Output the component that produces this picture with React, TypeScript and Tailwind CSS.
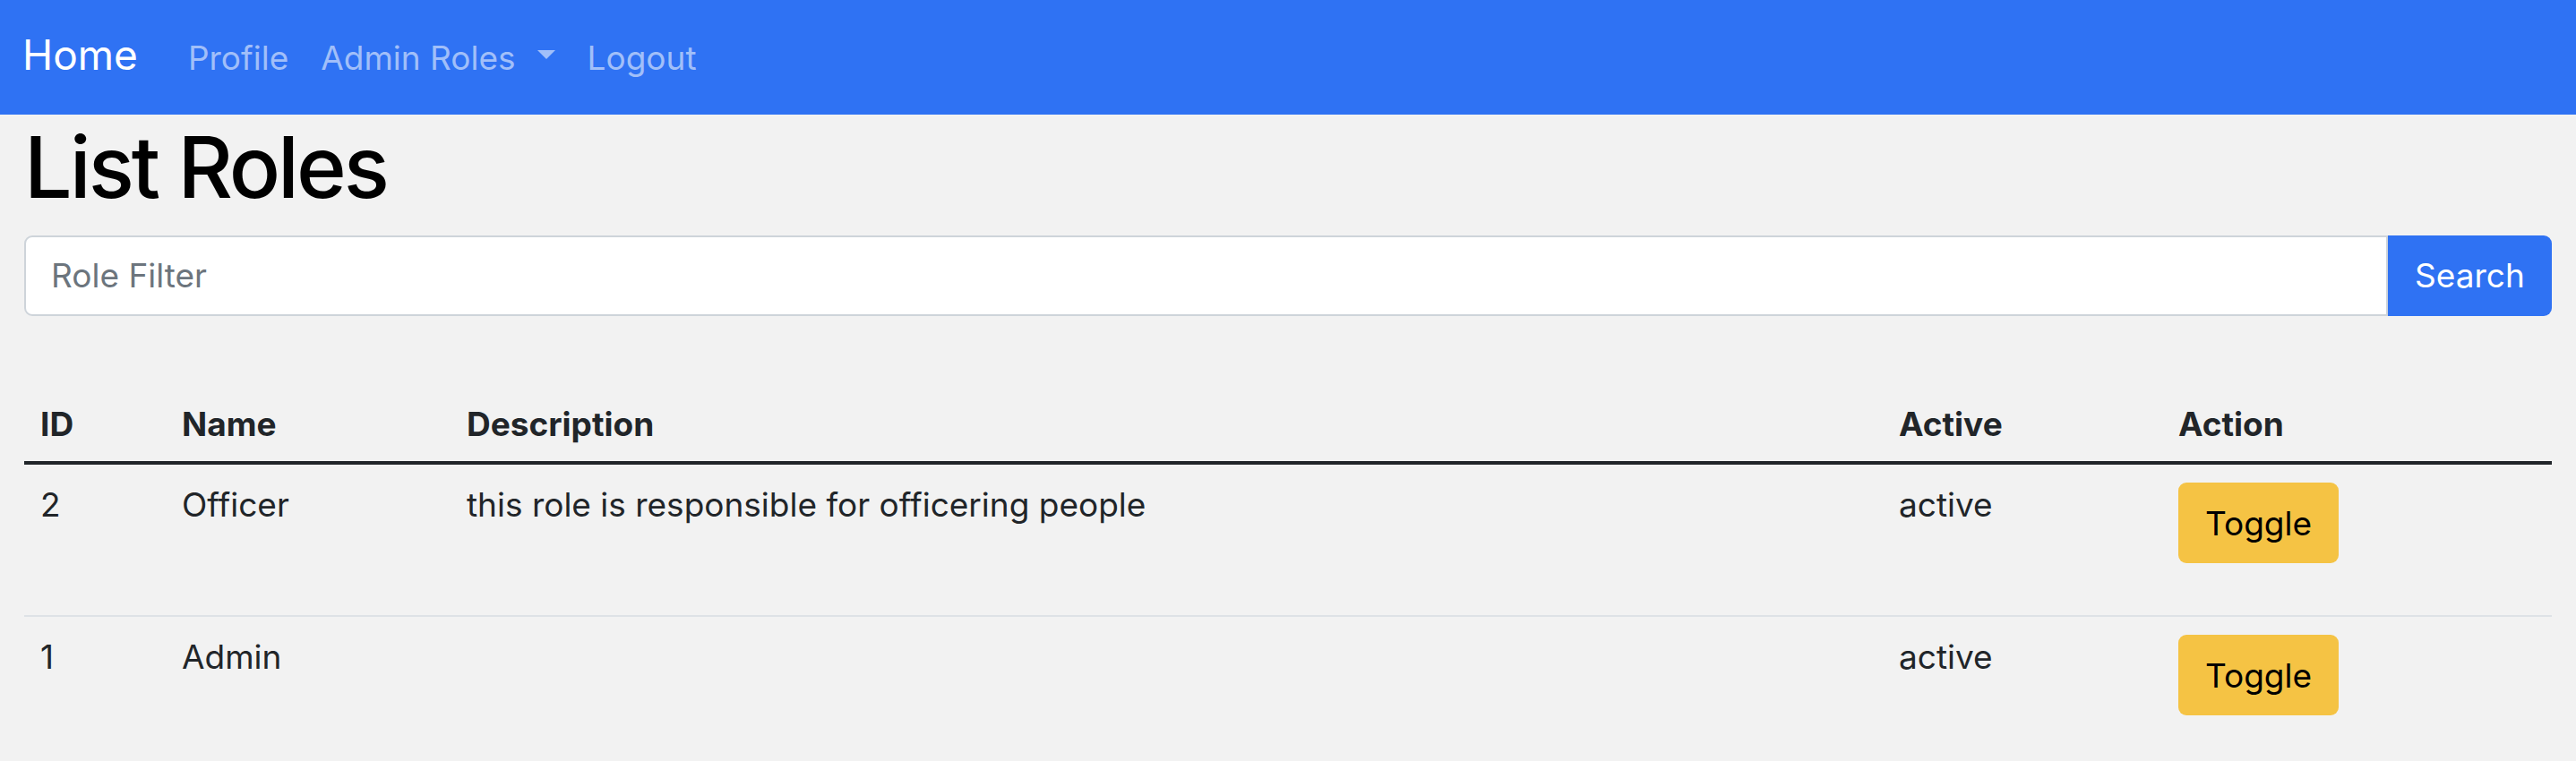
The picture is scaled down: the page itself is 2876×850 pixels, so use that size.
import React from 'react';

type Role = { id: number; name: string; description: string; status: string };

const roles: Role[] = [
  { id: 2, name: 'Officer', description: 'this role is responsible for officering people', status: 'active' },
  { id: 1, name: 'Admin', description: '', status: 'active' },
];

const cols = 'grid grid-cols-[158px_318px_1fr_312px_435px]';

function NavBar() {
  return (
    <nav className="bg-[#2f72f3] h-[128px] flex items-center px-[25px]">
      <a className="text-white text-[46px] leading-[69px] mr-[38px] mb-[5px]">Home</a>
      <a className="text-[#a1bff9] text-[37px] leading-[55px] px-[18px]">Profile</a>
      <a className="text-[#a1bff9] text-[37px] leading-[55px] px-[18px] flex items-center">
        Admin Roles
        <span className="ml-[24px] mb-[6px] w-0 h-0 border-t-[10px] border-x-[10px] border-x-transparent border-t-[#a1bff9]" />
      </a>
      <a className="text-[#a1bff9] text-[37px] leading-[55px] px-[18px]">Logout</a>
    </nav>
  );
}

function RoleRow({ role }: { role: Role }) {
  return (
    <div className={`${cols} h-[170px] border-b-2 border-[#dee2e6] text-[37px] leading-[55px] text-[#212529]`}>
      <div className="pt-[17px] px-[18px]">{role.id}</div>
      <div className="pt-[17px] px-[18px]">{role.name}</div>
      <div className="pt-[17px] px-[18px]">{role.description}</div>
      <div className="pt-[17px] px-[18px]">{role.status}</div>
      <div className="pt-[20px] px-[18px]">
        <button className="w-[179px] h-[90px] rounded-[9px] bg-[#f5c344] text-black text-[37px]">Toggle</button>
      </div>
    </div>
  );
}

export default function App() {
  return (
    <div className="h-[850px] overflow-hidden bg-[#f2f2f2] font-['Inter',sans-serif]">
      <NavBar />
      <div className="px-[27px]">
        {/* Page title */}
        <h1 className="text-[95px] leading-[114px] font-medium tracking-[-3px] text-black mt-[2px] mb-[19px]">List Roles</h1>

        {/* Filter */}
        <div className="flex h-[90px]">
          <input
            placeholder="Role Filter"
            className="flex-1 bg-white border-2 border-[#ced4da] rounded-l-[9px] px-[28px] text-[37px] placeholder:text-[#6c757d] outline-none"
          />
          <button className="w-[183px] bg-[#2f72f3] text-white text-[37px] rounded-r-[9px]">Search</button>
        </div>

        {/* Roles table */}
        <div className="mt-[75px]">
          <div className={`${cols} border-b-4 border-[#212529] text-[37px] leading-[55px] font-bold text-[#212529]`}>
            <div className="pt-[18px] pb-[14px] px-[18px]">ID</div>
            <div className="pt-[18px] pb-[14px] px-[18px]">Name</div>
            <div className="pt-[18px] pb-[14px] px-[18px]">Description</div>
            <div className="pt-[18px] pb-[14px] px-[18px]">Active</div>
            <div className="pt-[18px] pb-[14px] px-[18px]">Action</div>
          </div>
          {roles.map((r) => (
            <RoleRow key={r.id} role={r} />
          ))}
        </div>
      </div>
    </div>
  );
}
